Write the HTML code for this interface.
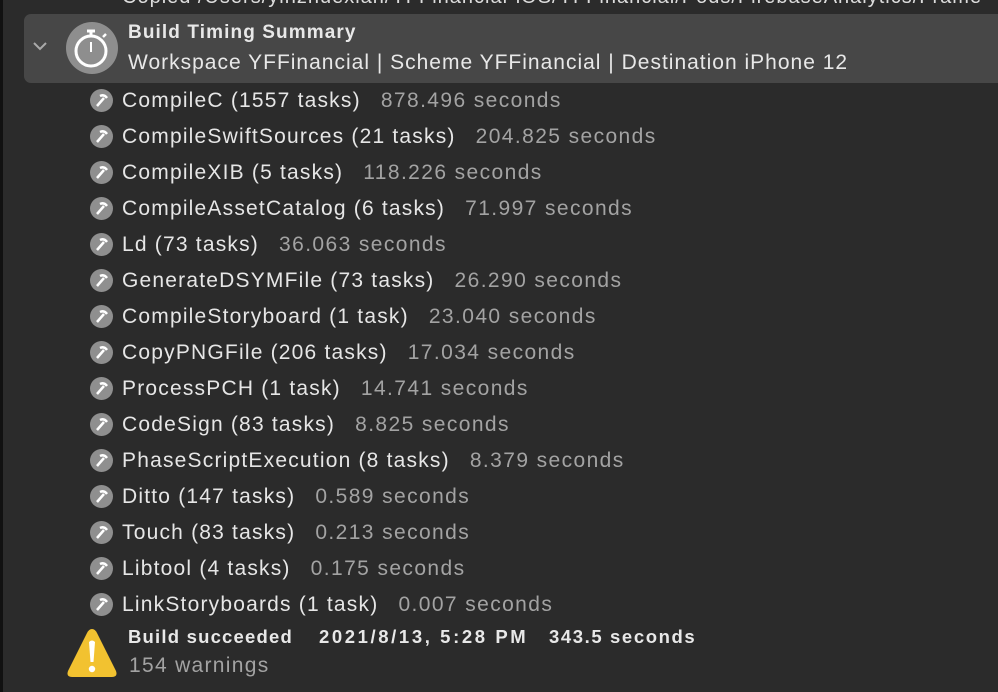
<!DOCTYPE html>
<html><head><style>
body{margin:0;width:998px;height:692px;background:#2b2b2b;overflow:hidden;font-family:"Liberation Sans",sans-serif;position:relative}
.lb{position:absolute;left:0;top:0;width:3px;height:692px;background:#111}
.top{position:absolute;left:122px;top:-14px;font-size:20px;color:#ddd;white-space:nowrap;letter-spacing:1px}
.hdr{position:absolute;left:24px;top:14px;width:990px;height:69px;background:#474747;border-radius:7px}
.chev{position:absolute;left:32px;top:40px}
.clock{position:absolute;left:66px;top:22px;width:52px;height:52px;border-radius:50%;background:#8e8e8e}
.t1{position:absolute;left:128px;top:22px;font-size:19px;font-weight:bold;color:#e8e8e8;letter-spacing:1.1px}
.t2{position:absolute;left:128px;top:51px;font-size:21px;color:#e8e8e8;white-space:nowrap;letter-spacing:1px}
.row{position:absolute;left:90px;height:24px;font-size:21px;color:#e6e6e6;white-space:nowrap;letter-spacing:1.2px}
.row .ic{position:absolute;left:0;top:1px;width:23px;height:23px;border-radius:50%;background:#8f8f8f}
.row .tx{position:absolute;left:32px;top:1px}
.row .s{color:#a3a3a3;margin-left:13px;letter-spacing:1.4px}
.bs{position:absolute;top:626px;font-size:18.5px;font-weight:bold;color:#e8e8e8;white-space:pre;letter-spacing:1.2px}
.wn{position:absolute;left:129px;top:654px;font-size:21px;color:#a3a3a3;letter-spacing:1.3px}
</style></head><body>
<div class="lb"></div>
<div class="top">Copied /Users/yinzhuexian/YFFinancial-iOS/YFFinancial/Pods/FirebaseAnalytics/Frame</div>
<div class="hdr"></div>
<svg class="chev" width="16" height="12" viewBox="0 0 16 12"><path d="M2 3 L8 9 L14 3" stroke="#aaa" stroke-width="2" fill="none"/></svg>
<div class="clock"><svg width="52" height="52" viewBox="0 0 52 52"><circle cx="25" cy="29" r="15" stroke="#fff" stroke-width="3" fill="none"/><line x1="25" y1="9" x2="25" y2="14" stroke="#fff" stroke-width="3"/><line x1="21" y1="9" x2="29" y2="9" stroke="#fff" stroke-width="3"/><line x1="37" y1="15" x2="40" y2="12" stroke="#fff" stroke-width="2.5"/><line x1="25" y1="20" x2="25" y2="30" stroke="#fff" stroke-width="2"/></svg></div>
<div class="t1">Build Timing Summary</div>
<div class="t2">Workspace YFFinancial | Scheme YFFinancial | Destination iPhone 12</div>

<div class="row" style="top:88px"><div class="ic"><svg width="23" height="23"><path d="M7 17 L14 9" stroke="#fff" stroke-width="2.5"/><path d="M10 7 Q14 5 17 9" stroke="#fff" stroke-width="2.5" fill="none"/></svg></div><div class="tx">CompileC (1557 tasks) <span class="s">878.496 seconds</span></div></div>
<div class="row" style="top:124px"><div class="ic"><svg width="23" height="23"><path d="M7 17 L14 9" stroke="#fff" stroke-width="2.5"/><path d="M10 7 Q14 5 17 9" stroke="#fff" stroke-width="2.5" fill="none"/></svg></div><div class="tx">CompileSwiftSources (21 tasks) <span class="s">204.825 seconds</span></div></div>
<div class="row" style="top:160px"><div class="ic"><svg width="23" height="23"><path d="M7 17 L14 9" stroke="#fff" stroke-width="2.5"/><path d="M10 7 Q14 5 17 9" stroke="#fff" stroke-width="2.5" fill="none"/></svg></div><div class="tx">CompileXIB (5 tasks) <span class="s">118.226 seconds</span></div></div>
<div class="row" style="top:196px"><div class="ic"><svg width="23" height="23"><path d="M7 17 L14 9" stroke="#fff" stroke-width="2.5"/><path d="M10 7 Q14 5 17 9" stroke="#fff" stroke-width="2.5" fill="none"/></svg></div><div class="tx">CompileAssetCatalog (6 tasks) <span class="s">71.997 seconds</span></div></div>
<div class="row" style="top:232px"><div class="ic"><svg width="23" height="23"><path d="M7 17 L14 9" stroke="#fff" stroke-width="2.5"/><path d="M10 7 Q14 5 17 9" stroke="#fff" stroke-width="2.5" fill="none"/></svg></div><div class="tx">Ld (73 tasks) <span class="s">36.063 seconds</span></div></div>
<div class="row" style="top:268px"><div class="ic"><svg width="23" height="23"><path d="M7 17 L14 9" stroke="#fff" stroke-width="2.5"/><path d="M10 7 Q14 5 17 9" stroke="#fff" stroke-width="2.5" fill="none"/></svg></div><div class="tx">GenerateDSYMFile (73 tasks) <span class="s">26.290 seconds</span></div></div>
<div class="row" style="top:304px"><div class="ic"><svg width="23" height="23"><path d="M7 17 L14 9" stroke="#fff" stroke-width="2.5"/><path d="M10 7 Q14 5 17 9" stroke="#fff" stroke-width="2.5" fill="none"/></svg></div><div class="tx">CompileStoryboard (1 task) <span class="s">23.040 seconds</span></div></div>
<div class="row" style="top:340px"><div class="ic"><svg width="23" height="23"><path d="M7 17 L14 9" stroke="#fff" stroke-width="2.5"/><path d="M10 7 Q14 5 17 9" stroke="#fff" stroke-width="2.5" fill="none"/></svg></div><div class="tx">CopyPNGFile (206 tasks) <span class="s">17.034 seconds</span></div></div>
<div class="row" style="top:376px"><div class="ic"><svg width="23" height="23"><path d="M7 17 L14 9" stroke="#fff" stroke-width="2.5"/><path d="M10 7 Q14 5 17 9" stroke="#fff" stroke-width="2.5" fill="none"/></svg></div><div class="tx">ProcessPCH (1 task) <span class="s">14.741 seconds</span></div></div>
<div class="row" style="top:412px"><div class="ic"><svg width="23" height="23"><path d="M7 17 L14 9" stroke="#fff" stroke-width="2.5"/><path d="M10 7 Q14 5 17 9" stroke="#fff" stroke-width="2.5" fill="none"/></svg></div><div class="tx">CodeSign (83 tasks) <span class="s">8.825 seconds</span></div></div>
<div class="row" style="top:448px"><div class="ic"><svg width="23" height="23"><path d="M7 17 L14 9" stroke="#fff" stroke-width="2.5"/><path d="M10 7 Q14 5 17 9" stroke="#fff" stroke-width="2.5" fill="none"/></svg></div><div class="tx">PhaseScriptExecution (8 tasks) <span class="s">8.379 seconds</span></div></div>
<div class="row" style="top:484px"><div class="ic"><svg width="23" height="23"><path d="M7 17 L14 9" stroke="#fff" stroke-width="2.5"/><path d="M10 7 Q14 5 17 9" stroke="#fff" stroke-width="2.5" fill="none"/></svg></div><div class="tx">Ditto (147 tasks) <span class="s">0.589 seconds</span></div></div>
<div class="row" style="top:520px"><div class="ic"><svg width="23" height="23"><path d="M7 17 L14 9" stroke="#fff" stroke-width="2.5"/><path d="M10 7 Q14 5 17 9" stroke="#fff" stroke-width="2.5" fill="none"/></svg></div><div class="tx">Touch (83 tasks) <span class="s">0.213 seconds</span></div></div>
<div class="row" style="top:556px"><div class="ic"><svg width="23" height="23"><path d="M7 17 L14 9" stroke="#fff" stroke-width="2.5"/><path d="M10 7 Q14 5 17 9" stroke="#fff" stroke-width="2.5" fill="none"/></svg></div><div class="tx">Libtool (4 tasks) <span class="s">0.175 seconds</span></div></div>
<div class="row" style="top:592px"><div class="ic"><svg width="23" height="23"><path d="M7 17 L14 9" stroke="#fff" stroke-width="2.5"/><path d="M10 7 Q14 5 17 9" stroke="#fff" stroke-width="2.5" fill="none"/></svg></div><div class="tx">LinkStoryboards (1 task) <span class="s">0.007 seconds</span></div></div>

<svg style="position:absolute;left:66px;top:625px" width="52" height="56" viewBox="0 0 52 56"><path d="M26 4 Q29 4 31 8 L50 46 Q52 52 46 52 L6 52 Q0 52 2 46 L21 8 Q23 4 26 4Z" fill="#f2c230"/><path d="M23 17 Q26 14 29 17 L27.5 37 L24.5 37Z" fill="#fff"/><circle cx="26" cy="44" r="3.2" fill="#fff"/></svg>
<div class="bs" style="left:128px">Build succeeded</div>
<div class="bs" style="left:319px;letter-spacing:2.6px">2021/8/13, 5:28 PM</div>
<div class="bs" style="left:549px;letter-spacing:1.6px">343.5 seconds</div>
<div class="wn">154 warnings</div>
</body></html>
